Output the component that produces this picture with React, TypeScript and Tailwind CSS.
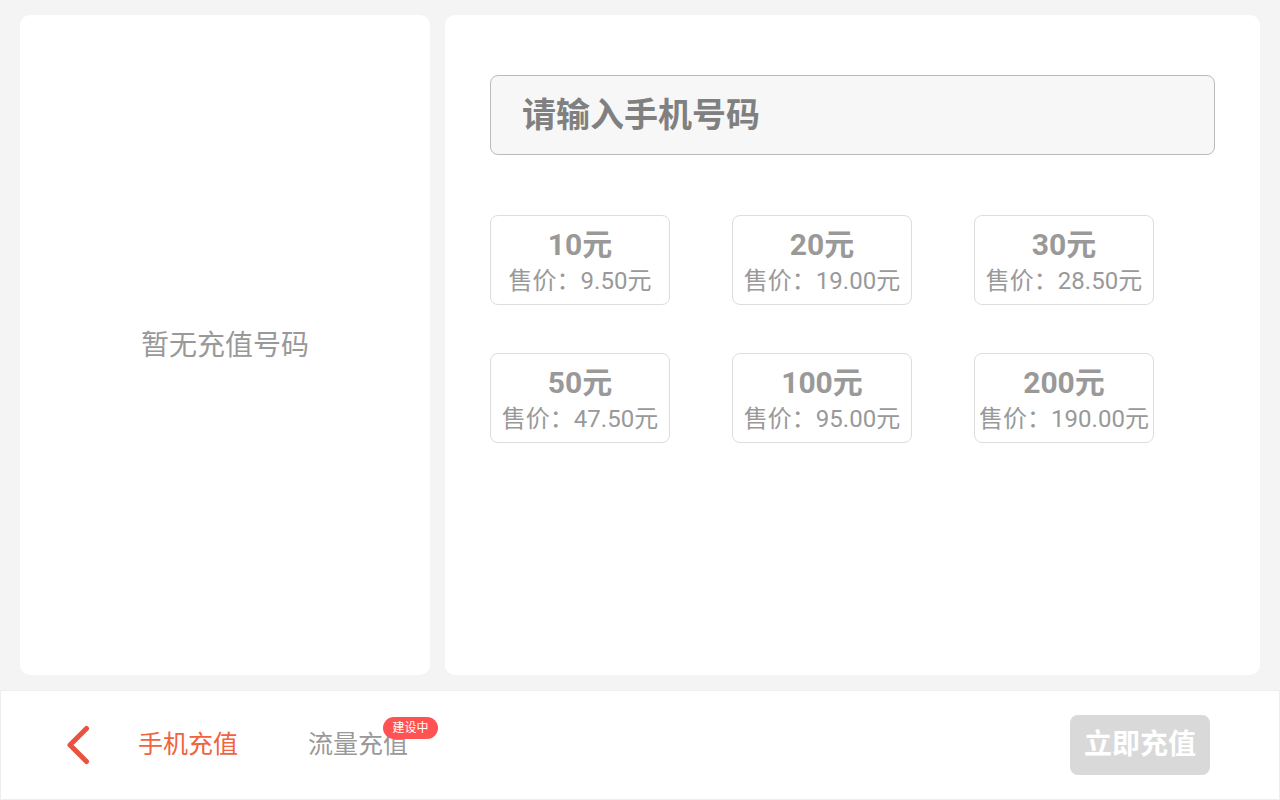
import React, { useState } from "react";

const amounts = [
  { face: "10元", price: "9.50元" },
  { face: "20元", price: "19.00元" },
  { face: "30元", price: "28.50元" },
  { face: "50元", price: "47.50元" },
  { face: "100元", price: "95.00元" },
  { face: "200元", price: "190.00元" },
];

export default function App() {
  const [phone, setPhone] = useState("");

  return (
    <div
      className="h-[800px] w-[1280px] bg-[#f4f4f4] flex flex-col"
      style={{ fontFamily: 'Roboto, "Noto Sans CJK SC", sans-serif' }}
    >
      {/* 上半部分 */}
      <div className="flex gap-[15px] px-[20px] pt-[15px]">
        <div className="w-[410px] h-[660px] bg-white rounded-[10px] flex items-center justify-center">
          <span className="text-[28px] text-[#999999] leading-[40px] mt-[2px]">暂无充值号码</span>
        </div>

        <div className="w-[815px] h-[660px] bg-white rounded-[10px] pl-[45px] pt-[60px]">
          <input
            value={phone}
            onChange={(e) => setPhone(e.target.value)}
            placeholder="请输入手机号码"
            className="w-[725px] h-[80px] bg-[#f7f7f7] border border-[#bbbbbb] rounded-[8px] px-[31px] text-[34px] font-bold text-[#666] placeholder:text-[#808080] outline-none"
          />

          <div className="grid grid-cols-[180px_180px_180px] gap-x-[62px] gap-y-[48px] mt-[60px]">
            {amounts.map((a) => (
              <div
                key={a.face}
                className="h-[90px] border border-[#dddddd] rounded-[8px] flex flex-col items-center pt-[11px]"
              >
                <span className="text-[30px] font-bold text-[#999999] leading-[36px]">{a.face}</span>
                <span className="text-[24px] text-[#999999] leading-[36px]">售价：{a.price}</span>
              </div>
            ))}
          </div>
        </div>
      </div>

      {/* 底部栏 */}
      <div className="mt-[15px] h-[110px] bg-white border border-[#eeeeee] flex items-center pl-[65px] pr-[69px]">
        <svg width="24" height="40" viewBox="0 0 24 40" className="mr-[48px]">
          <path d="M20.5 3.5 L4 20 L20.5 36.5" fill="none" stroke="#e8523f" strokeWidth="5" strokeLinecap="round" strokeLinejoin="round" />
        </svg>
        <span className="text-[25px] leading-[34px] text-[#f2623c]">手机充值</span>
        <div className="relative ml-[70px]">
          <span className="text-[25px] leading-[34px] text-[#999999]">流量充值</span>
          <span className="absolute left-[75px] top-[-11px] h-[22px] w-[55px] rounded-full bg-[#ff5252] text-white text-[12px] flex items-center justify-center">
            建设中
          </span>
        </div>
        <button className="ml-auto w-[140px] h-[60px] rounded-[8px] bg-[#d9d9d9] text-white text-[28px] font-bold">
          立即充值
        </button>
      </div>
    </div>
  );
}
